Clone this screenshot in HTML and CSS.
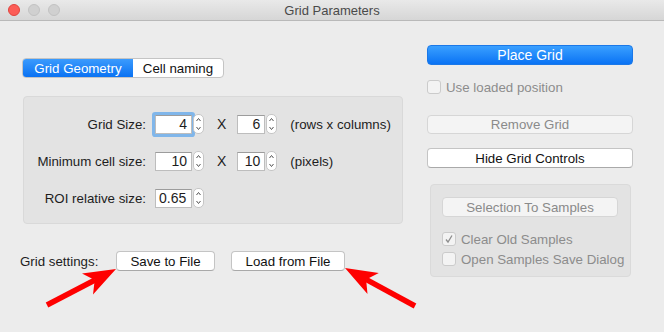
FILE: index.html
```html
<!DOCTYPE html>
<html lang="en">
  <head>
    <meta charset="UTF-8" />
    <title>Grid Parameters</title>
    <link rel="stylesheet" href="styles.css">
  </head>
  <body>
    <div class="window">
      <div class="titlebar">
        <div class="lights">
          <span class="light red"></span>
          <span class="light"></span>
          <span class="light"></span>
        </div>
        <div class="title">Grid Parameters</div>
      </div>

      <div class="content">
        <div class="left">
          <div class="tabs">
            <div class="tab active">Grid Geometry</div>
            <div class="tab">Cell naming</div>
          </div>

          <div class="panel">
            <div class="row">
              <div class="label">Grid Size:</div>
              <div class="field focus">4</div>
              <div class="spin">
                <svg width="11" height="20" viewBox="0 0 11 20"><path d="M3.5 7 L5.5 4.5 L7.5 7 M3.5 13 L5.5 15.5 L7.5 13" fill="none" stroke="#555" stroke-width="1"/></svg>
              </div>
              <div class="times">X</div>
              <div class="field small">6</div>
              <div class="spin">
                <svg width="11" height="20" viewBox="0 0 11 20"><path d="M3.5 7 L5.5 4.5 L7.5 7 M3.5 13 L5.5 15.5 L7.5 13" fill="none" stroke="#555" stroke-width="1"/></svg>
              </div>
              <div class="note">(rows x columns)</div>
            </div>

            <div class="row">
              <div class="label">Minimum cell size:</div>
              <div class="field">10</div>
              <div class="spin">
                <svg width="11" height="20" viewBox="0 0 11 20"><path d="M3.5 7 L5.5 4.5 L7.5 7 M3.5 13 L5.5 15.5 L7.5 13" fill="none" stroke="#555" stroke-width="1"/></svg>
              </div>
              <div class="times">X</div>
              <div class="field small">10</div>
              <div class="spin">
                <svg width="11" height="20" viewBox="0 0 11 20"><path d="M3.5 7 L5.5 4.5 L7.5 7 M3.5 13 L5.5 15.5 L7.5 13" fill="none" stroke="#555" stroke-width="1"/></svg>
              </div>
              <div class="note">(pixels)</div>
            </div>

            <div class="row">
              <div class="label">ROI relative size:</div>
              <div class="field left-text">0.65</div>
              <div class="spin">
                <svg width="11" height="20" viewBox="0 0 11 20"><path d="M3.5 7 L5.5 4.5 L7.5 7 M3.5 13 L5.5 15.5 L7.5 13" fill="none" stroke="#555" stroke-width="1"/></svg>
              </div>
            </div>
          </div>

          <div class="settings">
            <div class="settings-label">Grid settings:</div>
            <div class="btn save">Save to File</div>
            <div class="btn load">Load from File</div>
          </div>
        </div>

        <div class="right">
          <div class="btn primary">Place Grid</div>
          <div class="check disabled">
            <span class="box"></span>
            <span>Use loaded position</span>
          </div>
          <div class="btn disabled remove">Remove Grid</div>
          <div class="btn hide">Hide Grid Controls</div>

          <div class="samples">
            <div class="btn disabled">Selection To Samples</div>
            <div class="check disabled first">
              <span class="box">
                <svg width="12" height="12" viewBox="0 0 12 12"><path d="M3 6.5 L5 9 L9 2.5" fill="none" stroke="#8d8d8d" stroke-width="1.3"/></svg>
              </span>
              <span>Clear Old Samples</span>
            </div>
            <div class="check disabled second">
              <span class="box"></span>
              <span>Open Samples Save Dialog</span>
            </div>
          </div>
        </div>
      </div>

      <svg class="arrows" width="664" height="332" viewBox="0 0 664 332">
        <line x1="47" y1="305" x2="95" y2="280" stroke="#fe0000" stroke-width="5.5"/>
        <polygon points="116,269 82,273.5 94.7,280.1 93,294.5" fill="#fe0000"/>
        <line x1="415" y1="306" x2="366" y2="279.4" stroke="#fe0000" stroke-width="5.5"/>
        <polygon points="345,268 378.8,273 366.1,279.4 367.5,294" fill="#fe0000"/>
      </svg>
    </div>
  </body>
</html>
```

FILE: styles.css
```css
* {
  box-sizing: border-box;
  margin: 0;
  padding: 0;
}

body {
  background: #ececec;
  font-family: "Liberation Sans", Helvetica, Arial, sans-serif;
  font-size: 13.3px;
  color: #1d1d1d;
}

.window {
  position: relative;
  width: 664px;
  height: 332px;
  overflow: hidden;
  background: #ececec;
}

.titlebar {
  position: relative;
  height: 21px;
  background: linear-gradient(#e9e9e9, #d6d6d6);
  border-bottom: 1px solid #b9b9b9;
  display: flex;
  align-items: center;
  justify-content: center;
}

.lights {
  position: absolute;
  left: 8px;
  top: 4px;
  display: flex;
  gap: 8px;
}

.light {
  width: 12px;
  height: 12px;
  border-radius: 50%;
  background: #d0d0d0;
  border: 1px solid #c2c2c2;
}

.light.red {
  background: #fc5c56;
  border-color: #e0443e;
}

.title {
  color: #4a4a4a;
  font-size: 13px;
}

.content {
  display: flex;
  padding-left: 20px;
}

.left {
  width: 384px;
  padding-top: 37px;
}

.tabs {
  display: flex;
  margin-left: 2px;
  width: 202px;
  height: 20px;
  border: 1px solid #c4c4c4;
  border-radius: 4px;
  background: #fff;
  overflow: hidden;
}

.tab {
  display: flex;
  align-items: center;
  justify-content: center;
  width: 91px;
  color: #111;
}

.tab.active {
  width: 111px;
  background: linear-gradient(#3b9bfd, #0a72f3);
  color: #fff;
}

.panel {
  margin: 18px 0 0 3px;
  width: 380px;
  height: 128px;
  background: #e3e3e3;
  border: 1px solid #d9d9d9;
  border-radius: 4px;
  padding-top: 16px;
  display: flex;
  flex-direction: column;
  gap: 15px;
}

.row {
  display: flex;
  align-items: center;
  height: 22px;
}

.label {
  width: 122px;
  text-align: right;
  margin-right: 9px;
}

.field {
  width: 37px;
  height: 19px;
  background: #fff;
  border: 1px solid #bdbdbd;
  border-top-color: #9c9c9c;
  text-align: right;
  padding-right: 4px;
  line-height: 17px;
  font-size: 14px;
}

.field.small {
  width: 28px;
}

.field.left-text {
  text-align: left;
  padding-left: 3px;
}

.field.focus {
  box-shadow: 0 0 0 3px #80b6ea;
  border-radius: 1px;
}

.spin {
  width: 11px;
  height: 20px;
  margin-left: 1px;
  background: #fff;
  border: 1px solid #c6c6c6;
  border-radius: 5px;
  display: flex;
  align-items: center;
  justify-content: center;
}

.spin svg {
  display: block;
  flex-shrink: 0;
}

.times {
  margin: 0 11px 0 13px;
  font-size: 14px;
}

.note {
  margin-left: 13px;
}

.settings {
  display: flex;
  align-items: center;
  margin-top: 27px;
}

.settings-label {
  width: 96px;
}

.btn {
  height: 20px;
  display: flex;
  align-items: center;
  justify-content: center;
  background: #fff;
  border: 1px solid #c4c4c4;
  border-bottom-color: #a9a9a9;
  border-radius: 4px;
  color: #111;
}

.btn.save {
  width: 99px;
}

.btn.load {
  width: 114px;
  margin-left: 16px;
}

.right {
  width: 206px;
  margin-left: 23px;
  padding-top: 24px;
}

.btn.primary {
  background: linear-gradient(#3aa0ff, #0a73f4);
  border: 1px solid #1b78e8;
  color: #fff;
  font-size: 14px;
}

.btn.disabled {
  background: #f4f4f4;
  border-color: #d6d6d6;
  color: #8a8a8a;
}

.btn.remove {
  margin-top: 21px;
  height: 19px;
}

.btn.hide {
  margin-top: 14px;
}

.check {
  display: flex;
  align-items: center;
  height: 14px;
  margin-top: 15px;
}

.check.disabled {
  color: #8c8c8c;
}

.box {
  width: 14px;
  height: 14px;
  border: 1px solid #cbcbcb;
  border-radius: 3px;
  background: #f3f3f3;
  margin-right: 5px;
  display: flex;
  align-items: center;
  justify-content: center;
}

.samples {
  margin: 16px 0 0 3px;
  width: 201px;
  height: 93px;
  background: #e3e3e3;
  border: 1px solid #dadada;
  border-radius: 4px;
  padding: 12px 0 0 11px;
}

.samples .btn {
  width: 176px;
}

.check.first {
  margin-top: 15px;
}

.check.second {
  margin-top: 6px;
}

.arrows {
  position: absolute;
  left: 0;
  top: 0;
  pointer-events: none;
}
```
